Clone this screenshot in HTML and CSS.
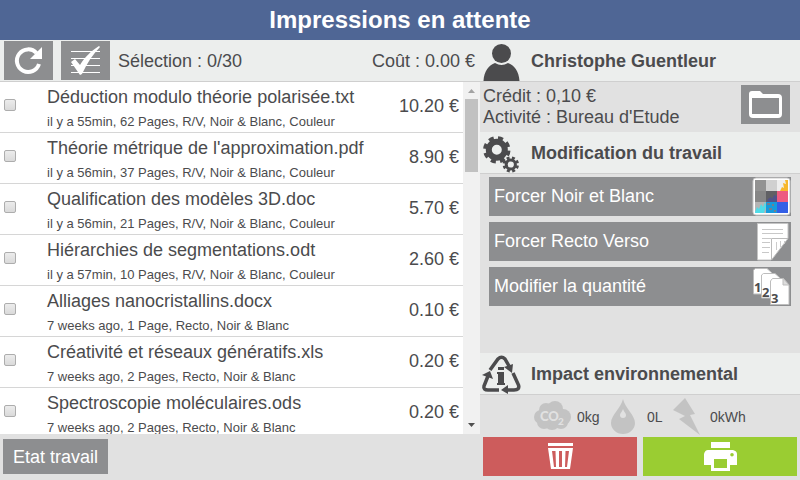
FILE: index.html
```html
<!DOCTYPE html>
<html lang="fr">
<head>
<meta charset="utf-8">
<title>Impressions en attente</title>
<link rel="stylesheet" href="styles.css">
</head>
<body>
<header class="title-bar"><h1>Impressions en attente</h1></header>
<main class="layout">
  <section class="jobs">
    <div class="toolbar">
      <button class="tile" type="button" aria-label="Actualiser">
        <svg width="49" height="39" viewBox="0 0 49 39"><path d="M32.500 12A11.300 11.300 0 1 0 35 23" fill="none" stroke="#fff" stroke-width="4"/><path d="M38 6V18H26Z" fill="#fff"/></svg>
      </button>
      <button class="tile" type="button" aria-label="Tout sélectionner">
        <svg width="49" height="39" viewBox="0 0 49 39"><path d="M10 10.500H39M10 17.500H39M10 24.500H39M10 31.500H39" stroke="#fff"/><path d="M10 21L14 18L19 24C24 16 30 10 38 5L39 6C32 13 26 22 21 33L19 34Z" fill="#fff"/></svg>
      </button>
      <span class="selection">Sélection : 0/30</span>
      <span class="cost">Coût : 0.00 €</span>
    </div>
    <div class="list-area">
      <ul class="job-list">
        <li class="job"><input type="checkbox" id="j1"><label for="j1"><span class="name">Déduction modulo théorie polarisée.txt</span><span class="meta">il y a 55min, 62 Pages, R/V, Noir &amp; Blanc, Couleur</span></label><span class="price">10.20 €</span></li>
        <li class="job"><input type="checkbox" id="j2"><label for="j2"><span class="name">Théorie métrique de l'approximation.pdf</span><span class="meta">il y a 56min, 37 Pages, R/V, Noir &amp; Blanc, Couleur</span></label><span class="price">8.90 €</span></li>
        <li class="job"><input type="checkbox" id="j3"><label for="j3"><span class="name">Qualification des modèles 3D.doc</span><span class="meta">il y a 56min, 21 Pages, R/V, Noir &amp; Blanc, Couleur</span></label><span class="price">5.70 €</span></li>
        <li class="job"><input type="checkbox" id="j4"><label for="j4"><span class="name">Hiérarchies de segmentations.odt</span><span class="meta">il y a 57min, 10 Pages, R/V, Noir &amp; Blanc, Couleur</span></label><span class="price">2.60 €</span></li>
        <li class="job"><input type="checkbox" id="j5"><label for="j5"><span class="name">Alliages nanocristallins.docx</span><span class="meta">7 weeks ago, 1 Page, Recto, Noir &amp; Blanc</span></label><span class="price">0.10 €</span></li>
        <li class="job"><input type="checkbox" id="j6"><label for="j6"><span class="name">Créativité et réseaux génératifs.xls</span><span class="meta">7 weeks ago, 2 Pages, Recto, Noir &amp; Blanc</span></label><span class="price">0.20 €</span></li>
        <li class="job"><input type="checkbox" id="j7"><label for="j7"><span class="name">Spectroscopie moléculaires.ods</span><span class="meta">7 weeks ago, 2 Pages, Recto, Noir &amp; Blanc</span></label><span class="price">0.20 €</span></li>
      </ul>
      <div class="scrollbar" aria-hidden="true">
        <svg width="17" height="17" viewBox="0 0 17 17"><path d="M5 11L8.500 7L12 11Z" fill="#a3a3a3"/></svg>
        <div class="thumb"></div>
        <svg width="17" height="17" viewBox="0 0 17 17"><path d="M5 6L8.500 10L12 6Z" fill="#505050"/></svg>
      </div>
    </div>
    <footer class="status"><button class="status-button" type="button">Etat travail</button></footer>
  </section>

  <aside class="side">
    <div class="heading">
      <svg width="42" height="41" viewBox="0 0 42 41"><circle cx="20.500" cy="13.500" r="9.500" fill="#4b4b4d"/><path d="M2.500 41C3 31 8 25 14 23Q20.500 27 27 23C33 25 38 31 38.500 41Z" fill="#4b4b4d"/></svg>
      <h2>Christophe Guentleur</h2>
    </div>
    <div class="account">
      <div><p>Crédit : 0,10 €</p><p>Activité : Bureau d'Etude</p></div>
      <button class="tile" type="button" aria-label="Dossiers">
        <svg width="49" height="39" viewBox="0 0 49 39"><path d="M8 9Q8 6 11 6H19L22 9H37Q41 9 41 13V29Q41 33 37 33H12Q8 33 8 29ZM11 13V29H38V13Z" fill="#fff" fill-rule="evenodd"/></svg>
      </button>
    </div>
    <div class="heading">
      <svg width="42" height="41" viewBox="0 0 42 41" fill="none" stroke="#4b4b4d">
        <circle cx="15.800" cy="17.800" r="8" stroke-width="6"/>
        <circle cx="15.800" cy="17.800" r="11.700" stroke-width="4" stroke-dasharray="5 4.190" transform="rotate(4 15.800 17.800)"/>
        <circle cx="29.800" cy="32.500" r="4.600" stroke-width="3"/>
        <circle cx="29.800" cy="32.500" r="6.700" stroke-width="3" stroke-dasharray="2.900 2.360" transform="rotate(8 29.800 32.500)"/>
      </svg>
      <h2>Modification du travail</h2>
    </div>
    <div class="actions">
      <button class="action" type="button"><span>Forcer Noir et Blanc</span>
        <svg width="39" height="39" viewBox="0 0 39 39">
          <rect x="1" y="1" width="37" height="37" rx="3" fill="#fff" stroke="#c9c9c9"/>
          <path d="M3 3H14V14H3Z" fill="#929292"/><path d="M14 3H25V14H14Z" fill="#d0d0d0"/><path d="M25 3H36V14H25Z" fill="#eee"/>
          <path d="M3 14H14V25H3Z" fill="#868686"/><path d="M14 14H25V25H14Z" fill="#606064"/><path d="M25 14H36V25H25Z" fill="#ed5b81"/>
          <path d="M3 25H14V36H3Z" fill="#b4b4b4"/><path d="M14 25H25V36H14Z" fill="#169bdc"/><path d="M25 25H36V36H25Z" fill="#335fe6"/>
          <path d="M36 3V14H28L30 10L32 11L31 6L34 7L33 3Z" fill="#f7b72c"/>
          <path d="M3 35L5 30L7 32L9 27L11 30L13 25L14 29L12 36H3Z" fill="#50dce8"/>
          <path d="M15 26H18V28H15ZM20 27H22V29H20ZM17 31H20V33H17ZM22 33H24V35H22Z" fill="#737e8e"/>
          <path d="M16 22L19 20L20 22L22 18L25 19V25H15Z" fill="#51528a"/>
        </svg></button>
      <button class="action" type="button"><span>Forcer Recto Verso</span>
        <svg width="39" height="39" viewBox="0 0 39 39"><path d="M5.500 1.500H36V16L19 38H5.500Z" fill="#fff" stroke="#c4c4c4"/><path d="M10 7.500H31M10 11.500H31M10 16.500H19M10 20.500H18M10 25.500H18M10 30.500H17" stroke="#c8c8c8"/><path d="M19.500 16.500H36L19.500 38Z" fill="#fff" stroke="#bbb"/><path d="M24.500 20V28M28.500 19V25M32.500 19V22" stroke="#ccc"/></svg></button>
      <button class="action" type="button"><span>Modifier la quantité</span>
        <svg width="39" height="39" viewBox="0 0 39 39" fill="#fff" stroke="#bdbdbd"><path d="M3.500 1.500H15L20 6V27H1.500V3Z"/><path d="M11.500 6.500H23L28 11V31H9.500V8Z"/><path d="M20.500 11.500H31L37 18V37.500H18.500V14Z"/><path d="M31 11V18H37Z" fill="#ddd"/><g class="page-number"><text x="2" y="25">1</text><text x="10" y="30">2</text><text x="19" y="36">3</text></g></svg></button>
    </div>
    <div class="heading">
      <svg width="42" height="41" viewBox="0 0 42 41">
        <g fill="none" stroke="#4b4b4d" stroke-width="3.500"><path d="M9 17L17 6Q20.500 2.500 24 6L28 13"/><path d="M7 23L3 33Q2 37 7 37H18"/><path d="M32 20L37.500 32Q39 37 33 37H26"/></g>
        <path d="M23 14L32 11L31 20ZM1 22L9 18L12 26ZM20 37L27 32V41Z" fill="#4b4b4d"/>
        <path d="M17 14H23V17H17ZM16 19H23V30H24V32H16V30H17V21H16Z" fill="#4b4b4d"/>
      </svg>
      <h2>Impact environnemental</h2>
    </div>
    <div class="impact">
      <svg width="37" height="38" viewBox="0 0 37 38"><g fill="#c3c3c3"><circle cx="7" cy="20" r="7"/><circle cx="12" cy="13" r="7"/><circle cx="21" cy="12" r="8"/><circle cx="29" cy="20" r="8"/><circle cx="27" cy="25" r="7"/><circle cx="18" cy="25" r="8"/><circle cx="10" cy="25" r="7"/></g><text class="co2" x="6" y="24">CO</text><text class="co2-index" x="24" y="28">2</text></svg>
      <span>0kg</span>
      <svg width="30" height="38" viewBox="0 0 30 38"><path d="M12 2C10 11 0 18 0 26A12 11 0 0 0 24 26C24 18 14 11 12 2ZM12 12C13 15 15 16 15 18A3 3 0 0 1 9 18C9 16 11 15 12 12Z" fill="#c3c3c3" fill-rule="evenodd"/></svg>
      <span class="water">0L</span>
      <svg width="31" height="38" viewBox="0 0 31 38"><path d="M12 1L22 17L17 18L27 38L6 22L12 19L0 13Z" fill="#c3c3c3"/></svg>
      <span class="energy">0kWh</span>
    </div>
    <div class="commands">
      <button class="command delete" type="button" aria-label="Supprimer"><svg width="25" height="27" viewBox="0 0 25 27"><path d="M0 0H25V3H0ZM0 5H25L22 26H3ZM4 8L6 24H8L7.500 8ZM11 8V24H14V8ZM17.500 8L17 24H19L21 8Z" fill="#fff" fill-rule="evenodd"/></svg></button>
      <button class="command print" type="button" aria-label="Imprimer"><svg width="33" height="29" viewBox="0 0 33 29"><path d="M7 0H26V6H7ZM4 8H29Q33 9 33 12V23H26V29H7V23H0V12Q1 8 4 8ZM10 17V26H23V17ZM28 11A1.800 1.800 0 1 0 28 14.600A1.800 1.800 0 1 0 28 11Z" fill="#fff" fill-rule="evenodd"/></svg></button>
    </div>
  </aside>
</main>
</body>
</html>
```
FILE: styles.css
```css
* { box-sizing: border-box; }
body {
  margin: 0;
  height: 100vh;
  display: flex;
  flex-direction: column;
  overflow: hidden;
  background: #e1e1e1;
  color: #4b4b4d;
  font: 18px/21px "Liberation Sans", Arial, sans-serif;
}
h1, h2, p, ul { margin: 0; padding: 0; }
button { border: 0; border-radius: 0; padding: 0; font: inherit; color: #fff; background: #8d8e90; }
svg { display: block; flex: none; }

.title-bar { flex: none; background: #4f6695; color: #fff; text-align: center; }
.title-bar h1 { font-size: 24px; line-height: 40px; }
.layout { flex: 1; min-height: 0; display: grid; grid-template-columns: 3fr 2fr; }
.jobs, .side { min-width: 0; min-height: 0; display: flex; flex-direction: column; }

.toolbar, .heading {
  flex: none;
  height: 42px;
  display: flex;
  align-items: center;
  background: #eceeed;
  border-bottom: 1px solid #cfcfcf;
  line-height: 22px;
}
.toolbar { gap: 8px; padding: 0 5px 0 4px; }
.cost { margin-left: auto; }
.tile { width: 49px; height: 39px; flex: none; }

.list-area { flex: 1; min-height: 0; display: flex; }
.job-list { flex: 1; overflow: hidden; background: #fff; list-style: none; }
.job {
  height: 51px;
  display: flex;
  align-items: center;
  padding: 0 4px;
  border-bottom: 1px solid #d6d6d6;
}
.job input {
  appearance: none;
  width: 12px;
  height: 12px;
  margin: 0 31px 4px 0;
  border: 1px solid #adadad;
  border-radius: 2px;
  background: linear-gradient(#ececec, #dadada);
}
.job label { flex: 1; height: 50px; padding-top: 5px; }
.name, .meta { display: block; }
.meta { margin-top: 6px; font-size: 13px; line-height: 16px; }
.price { padding-bottom: 2px; }

.scrollbar { width: 17px; display: flex; flex-direction: column; background: #f1f1f1; }
.thumb { height: 73px; margin: 0 2px auto; background: #c1c1c1; }

.status { flex: none; height: 46px; padding: 5px 3px; }
.status-button { height: 35px; padding: 1px 10px 0; }

.heading { padding-left: 1px; gap: 8px; }
.heading h2 { font-size: 18px; line-height: 22px; padding-top: 1px; }
.account { height: 50px; flex: none; display: flex; justify-content: space-between; align-items: flex-start; padding: 3px 10px 0 3px; }
.account div { padding-top: 1px; }
.actions { flex: 1; display: flex; flex-direction: column; gap: 6px; padding: 3px 9px; }
.action { height: 39px; display: flex; justify-content: space-between; align-items: center; padding-left: 5px; }
.page-number { font: bold 13px "Open Sans", sans-serif; fill: #4b4b4d; stroke: none; }

.impact { height: 42px; flex: none; display: flex; align-items: center; gap: 6px; padding-left: 54px; font-size: 14px; }
.impact span { width: 28px; padding-top: 2px; }
.impact .water { width: 20px; }
.impact .energy { width: auto; }
.co2 { font: 900 13px Lato, sans-serif; fill: #e1e1e1; }
.co2-index { font: 900 10px Lato, sans-serif; fill: #e1e1e1; }

.commands { flex: none; display: flex; gap: 6px; padding: 0 3px 4px; }
.command { flex: 1; height: 39px; display: flex; justify-content: center; align-items: center; }
.delete { background: #cd5c5c; }
.print { background: #9acd32; }
```
